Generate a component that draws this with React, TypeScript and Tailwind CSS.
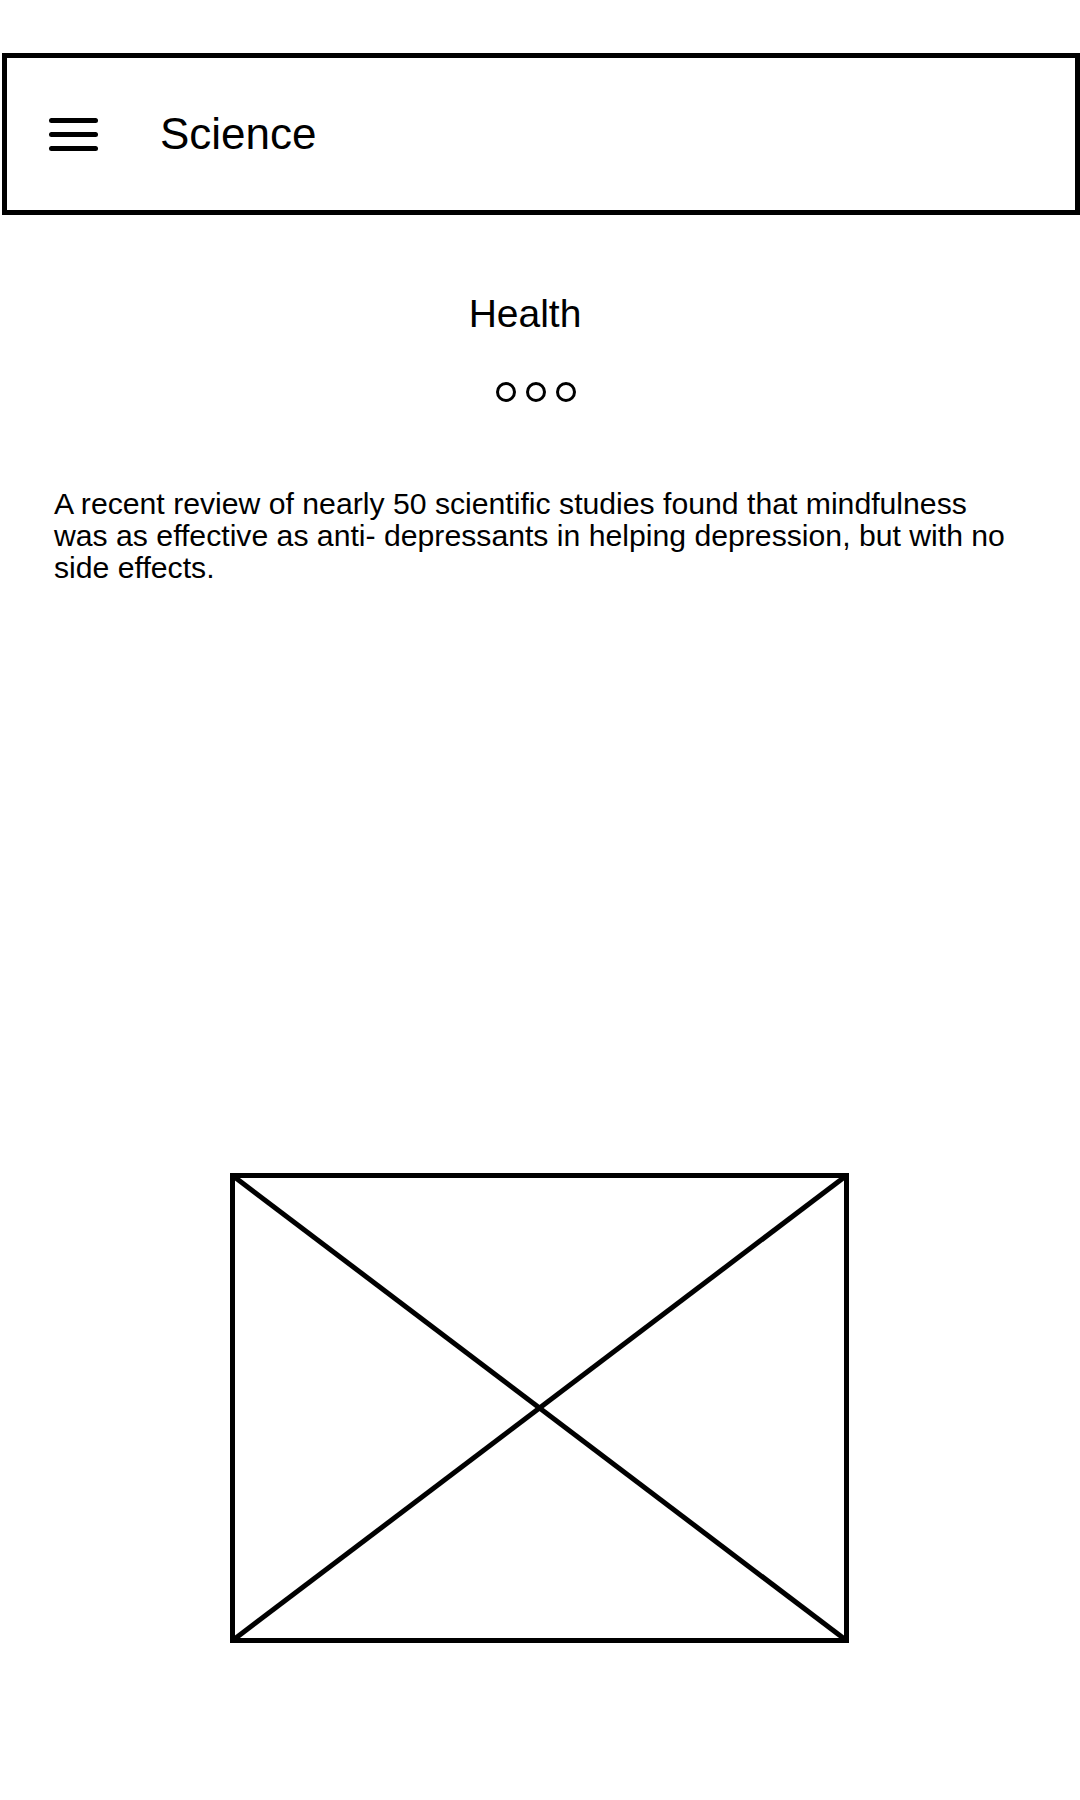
export default function App() {
  return (
    <div className="min-h-[1800px] bg-white pt-[53px] text-black" style={{ fontFamily: '"Liberation Sans", Arial, sans-serif' }}>
      {/* Top bar */}
      <header className="ml-[2px] flex h-[162px] w-[1078px] items-center border-[5px] border-black pl-[42px]">
        <div className="flex w-[49px] flex-col gap-[9px]">
          <span className="block h-[5px] w-full rounded-full bg-black" />
          <span className="block h-[5px] w-full rounded-full bg-black" />
          <span className="block h-[5px] w-full rounded-full bg-black" />
        </div>
        <h1 className="ml-[62px] text-[44px] leading-[50px]">Science</h1>
      </header>

      {/* Title + pager */}
      <div className="mt-[77px] flex justify-center pr-[30px]">
        <h2 className="text-[39px] leading-[44px]">Health</h2>
      </div>
      <div className="mt-[46px] flex justify-center gap-[10px] pr-[8px]">
        <span className="block h-[20px] w-[20px] rounded-full border-[3px] border-black" />
        <span className="block h-[20px] w-[20px] rounded-full border-[3px] border-black" />
        <span className="block h-[20px] w-[20px] rounded-full border-[3px] border-black" />
      </div>

      <p className="mt-[86px] w-[1016px] pl-[54px] text-[30.2px] leading-[32px]">
        A recent review of nearly 50 scientific studies found that mindfulness was as effective as anti- depressants in helping depression, but with no side effects.
      </p>

      {/* Image placeholder */}
      <div className="mt-[589px] pl-[230px]">
        <svg width="619" height="470" viewBox="0 0 619 470" className="block">
          <rect x="2.5" y="2.5" width="614" height="465" fill="none" stroke="black" strokeWidth="5" />
          <line x1="2.5" y1="2.5" x2="616.5" y2="467.5" stroke="black" strokeWidth="5" />
          <line x1="616.5" y1="2.5" x2="2.5" y2="467.5" stroke="black" strokeWidth="5" />
        </svg>
      </div>
    </div>
  )
}
